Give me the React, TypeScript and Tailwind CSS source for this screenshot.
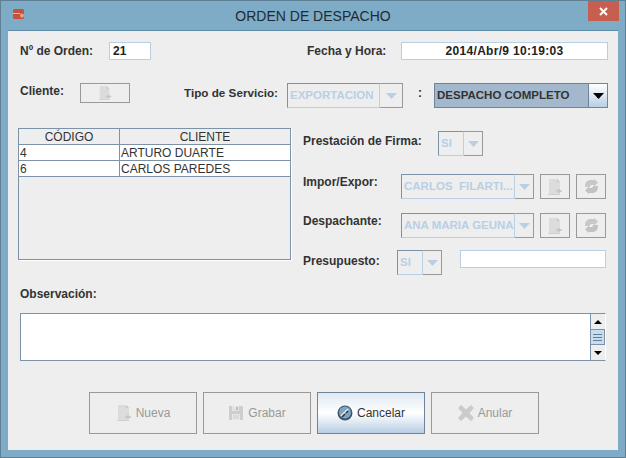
const FONT = "font-['Liberation_Sans',Arial,sans-serif]";

function FileIcon({ size = 16 }: { size?: number }) {
  return (
    <svg width={size} height={size} viewBox="0 0 16 16" aria-hidden>
      <path d="M2 0h8l3 3v12H2z" fill="#dcdcdc" />
      <path d="M10 0l3 3h-3z" fill="#c8c8c8" />
      <path d="M9 12h6M12 10v4" stroke="#c4c4c4" strokeWidth="1.5" />
      <path d="M1 15h12v1H1z" fill="#cfcfcf" />
    </svg>
  );
}

function RefreshIcon() {
  return (
    <svg width="15" height="15" viewBox="0 0 15 15" aria-hidden>
      <path d="M1 8C1 3 3 1 7 1h3V0l4 3.500L10 7.500V6H8C6.500 6 6 6.500 6 8z" fill="#c8c8c8" />
      <path d="M14 7c0 5-2 7-6 7H5v1l-4-3.500L5 7.500V9h2c1.500 0 2-.5 2-2z" fill="#c2c2c2" />
    </svg>
  );
}

function SaveIcon() {
  return (
    <svg width="16" height="16" viewBox="0 0 16 16" aria-hidden>
      <path d="M1 1h13l1 1v13H1z" fill="#cdcdcd" />
      <path d="M4 1h7v5H4z" fill="#e4e4e4" />
      <path d="M8 2h2v3H8z" fill="#bcbcbc" />
      <path d="M4 9h8v6H4z" fill="#e8e8e8" />
      <path d="M5 11h6M5 13h6" stroke="#cccccc" />
    </svg>
  );
}

function CancelIcon() {
  return (
    <svg width="16" height="16" viewBox="0 0 16 16" aria-hidden>
      <circle cx="8" cy="8" r="7.500" fill="#3f5566" />
      <circle cx="8" cy="7.500" r="6" fill="#7ea6c4" />
      <path d="M4 11l7-7" stroke="#e6eef5" strokeWidth="1.500" />
      <path d="M5 12l3-3M9 8l2-2" stroke="#26343f" strokeWidth="1.500" />
    </svg>
  );
}

function CrossIcon() {
  return (
    <svg width="16" height="16" viewBox="0 0 16 16" aria-hidden>
      <path d="M3 0l5 4.500L13 0l3 3-4.500 5 4.500 5-3 3-5-4.500L3 16l-3-3 4.500-5L0 3z" fill="#cbcbcb" />
    </svg>
  );
}

function Arrow({ color, up = false, w = 11, h = 6 }: { color: string; up?: boolean; w?: number; h?: number }) {
  return (
    <svg width={w} height={h} viewBox="0 0 11 6" preserveAspectRatio="none" aria-hidden>
      <path d={up ? "M0 6L5.500 0 11 6z" : "M0 0h11L5.500 6z"} fill={color} />
    </svg>
  );
}

function Combo({ value, width, field, enabled = false }: { value: string; width: string; field: string; enabled?: boolean }) {
  return (
    <div className={`flex h-[25px] ${width}`}>
      {enabled ? (
        <>
          <div className="flex flex-1 items-center overflow-hidden border border-[#6f8499] bg-[#a3b8cc] pl-[2px] text-[11.5px] font-bold text-[#333333]">
            {value}
          </div>
          <div className="flex w-[19px] items-center justify-center border border-l-0 border-[#6f8499] bg-linear-to-b from-white to-[#b8cfe4]">
            <Arrow color="#000000" />
          </div>
        </>
      ) : (
        <>
          <div
            className={`flex ${field} items-center overflow-hidden whitespace-pre border border-[#b8cfe5] border-t-[#7c92a8] border-l-[#7c92a8] pl-[2px] text-[11.5px] font-bold text-[#b8cfe5]`}
          >
            {value}
          </div>
          <div className="flex flex-1 items-center justify-center border border-l-0 border-[#999999]">
            <Arrow color="#b8cfe5" />
          </div>
        </>
      )}
    </div>
  );
}

function Square({ children }: { children: React.ReactNode }) {
  return <div className="ml-[6px] flex h-[25px] w-[30px] items-center justify-center border border-[#999999]">{children}</div>;
}

function ActionButton({ label, icon, active = false }: { label: string; icon: React.ReactNode; active?: boolean }) {
  return (
    <div
      className={`flex h-[42px] w-[108px] items-center justify-center gap-[4px] border text-[12px] ${
        active
          ? "border-[#6f8499] bg-linear-to-b from-[#dfeaf3] via-white to-[#b8cfe4] text-[#333333]"
          : "border-[#999999] text-[#999999]"
      }`}
    >
      {icon}
      <span>{label}</span>
    </div>
  );
}

const ROWS = [
  { code: "4", name: "ARTURO DUARTE" },
  { code: "6", name: "CARLOS PAREDES" },
];

export default function App() {
  return (
    <div className={`${FONT} flex h-[458px] w-[626px] flex-col border border-[#5f7f94] bg-[#7eabc5] text-[#333333]`}>
      {/* Title bar */}
      <div className="relative flex h-[29px] shrink-0 items-center justify-center pt-[1px] text-[14px] text-[#1f2a33]">
        <svg className="absolute left-[12px] top-[8px]" width="12" height="10" viewBox="0 0 12 10" aria-hidden>
          <path d="M0 1l1-1h9l1 1v8l-1 1H1L0 9z" fill="#c9513c" />
          <path d="M0 4h7v1H0z" fill="#ecb0a0" />
          <circle cx="9" cy="6.500" r="2" fill="#e9a18f" />
        </svg>
        ORDEN DE DESPACHO
        <div className="absolute left-[587px] top-0 flex h-[20px] w-[31px] items-center justify-center bg-[#c75f50]">
          <svg width="9" height="9" viewBox="0 0 9 9" aria-hidden>
            <path d="M1 1l7 7M8 1L1 8" stroke="#ffffff" strokeWidth="2" />
          </svg>
        </div>
      </div>

      {/* Panel */}
      <div className="mx-[7px] h-[420px] shrink-0 border-t border-[#5f8aa5] bg-[#eeeeee] pl-[12px] pt-[11px]">
        <div className="flex h-[18px] items-center text-[12px] font-bold">
          <span className="w-[89px]">Nº de Orden:</span>
          <div className="flex h-[18px] w-[42px] items-center border border-[#b8cfe5] bg-white pl-[3px] text-[#222222]">21</div>
          <span className="ml-[156px] w-[94px]">Fecha y Hora:</span>
          <div className="flex h-[18px] w-[207px] items-center justify-center border border-[#b8cfe5] bg-white tracking-[0.3px] text-[#222222]">
            2014/Abr/9 10:19:03
          </div>
        </div>

        <div className="mt-[23px] flex h-[25px] text-[12px] font-bold">
          <span className="-mt-[1px] w-[60px]">Cliente:</span>
          <div className="flex h-[20px] w-[50px] items-center justify-center border border-[#999999]">
            <FileIcon size={14} />
          </div>
          <span className="ml-[54px] w-[103px] pt-[1px] text-[11.7px]">Tipo de Servicio:</span>
          <Combo value="EXPORTACION" width="w-[116px]" field="w-[93px]" />
          <span className="ml-[15px] w-[16px] pt-[1px]">:</span>
          <Combo value="DESPACHO COMPLETO" width="w-[174px]" field="" enabled />
        </div>

        <div className="mt-[20px] flex h-[147px]">
          {/* Table */}
          <div className="-ml-[2px] h-[132px] w-[273px] border border-[#7c92a8] text-[12px] shadow-[1px_1px_0_#ffffff]">
            <div className="flex h-[16px] border-b border-[#7c92a8] bg-[#eeeeee] text-center leading-[17px]">
              <span className="w-[101px] border-r border-[#7c92a8]">CÓDIGO</span>
              <span className="flex-1">CLIENTE</span>
            </div>
            {ROWS.map((r) => (
              <div key={r.code} className="flex h-[16px] border-b border-[#7c92a8] bg-white leading-[16px]">
                <span className="w-[101px] border-r border-[#7c92a8] pl-[1px]">{r.code}</span>
                <span className="flex-1 pl-[1px]">{r.name}</span>
              </div>
            ))}
          </div>

          {/* Right column */}
          <div className="ml-[12px] w-[305px] text-[12px] font-bold">
            <div className="mt-[3px] flex h-[24px]">
              <span className="w-[135px] pt-[1px]">Prestación de Firma:</span>
              <Combo value="SI" width="w-[45px]" field="w-[26px]" />
            </div>
            <div className="mt-[19px] flex h-[25px]">
              <span className="-mt-[1px] w-[98px]">Impor/Expor:</span>
              <Combo value="CARLOS  FILARTI..." width="w-[133px]" field="w-[114px]" />
              <Square><FileIcon /></Square>
              <Square><RefreshIcon /></Square>
            </div>
            <div className="mt-[14px] flex h-[25px]">
              <span className="-mt-[1px] w-[98px]">Despachante:</span>
              <Combo value="ANA MARIA GEUNA" width="w-[133px]" field="w-[114px]" />
              <Square><FileIcon /></Square>
              <Square><RefreshIcon /></Square>
            </div>
            <div className="mt-[12px] flex h-[25px]">
              <span className="w-[94px] pt-[2px]">Presupuesto:</span>
              <Combo value="SI" width="w-[45px]" field="w-[26px]" />
              <div className="ml-[18px] h-[18px] w-[146px] border border-[#b8cfe5] bg-white" />
            </div>
          </div>
        </div>

        <div className="mt-[12px] h-[14px] text-[12px] font-bold leading-[14px]">Observación:</div>

        {/* Observation */}
        <div className="mt-[12px] flex h-[48px] w-[586px] border border-[#7c92a8] border-r-white bg-white">
          <div className="flex-1" />
          <div className="flex w-[15px] flex-col border-l border-[#7c92a8] bg-[#eeeeee]">
            <div className="flex h-[15px] items-center justify-center">
              <Arrow color="#000000" up w={8} h={4} />
            </div>
            <div className="flex h-[16px] flex-col items-center justify-center gap-[2px] border border-l-0 border-[#7c92a8] bg-[#c8dcee]">
              <div className="h-px w-[9px] bg-[#5f7f94]" />
              <div className="h-px w-[9px] bg-[#5f7f94]" />
              <div className="h-px w-[9px] bg-[#5f7f94]" />
            </div>
            <div className="flex flex-1 items-center justify-center">
              <Arrow color="#000000" w={8} h={4} />
            </div>
          </div>
        </div>

        <div className="ml-[69px] mt-[31px] flex gap-[6px]">
          <ActionButton label="Nueva" icon={<FileIcon />} />
          <ActionButton label="Grabar" icon={<SaveIcon />} />
          <ActionButton label="Cancelar" icon={<CancelIcon />} active />
          <ActionButton label="Anular" icon={<CrossIcon />} />
        </div>
      </div>
    </div>
  );
}
